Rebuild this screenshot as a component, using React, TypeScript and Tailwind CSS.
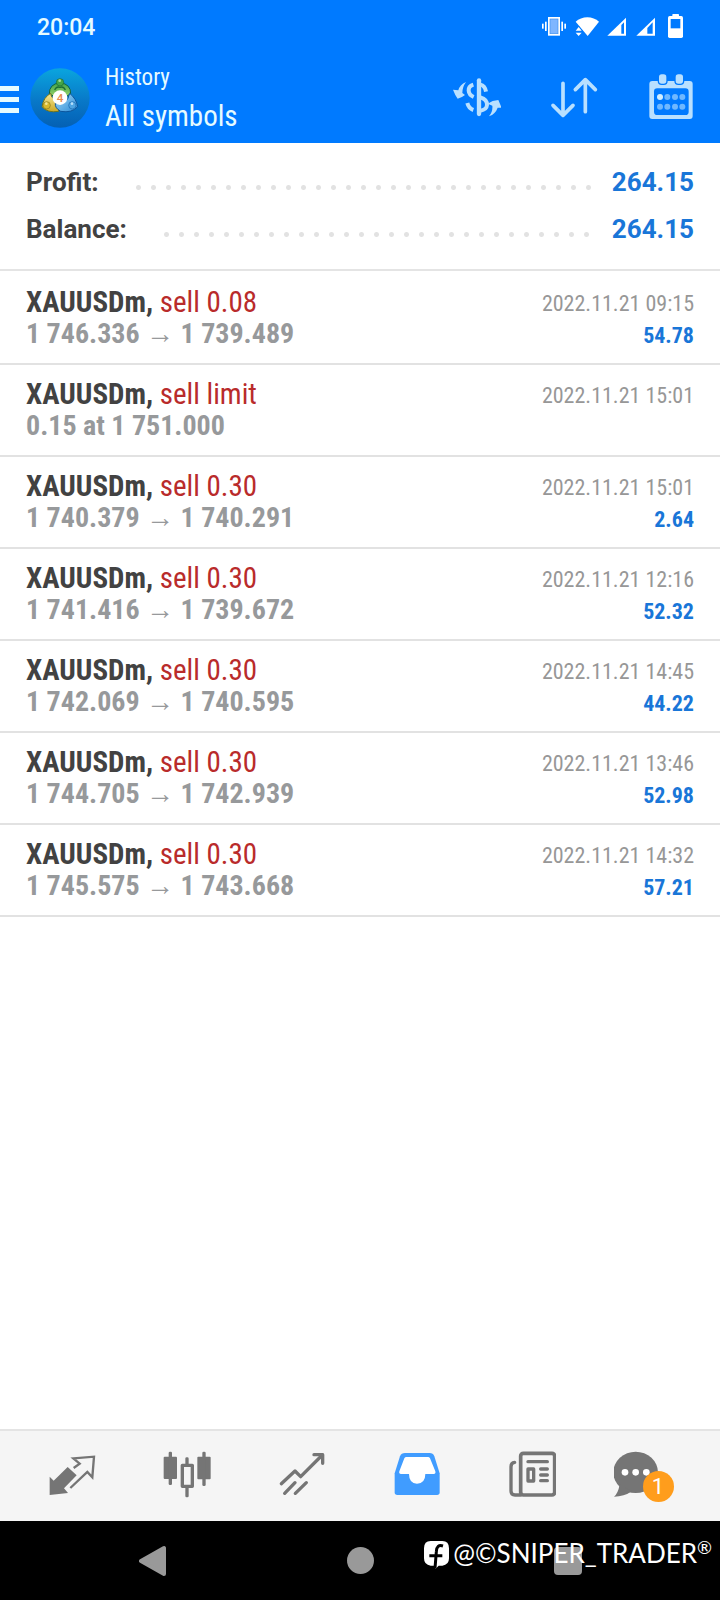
import type { ReactNode } from 'react';
import { clsx } from 'clsx';

interface Deal {
  id: number;
  symbol: string;
  action: string;
  detail: string;
  time: string;
  profit?: string;
}

const DEALS: Deal[] = [
  { id: 1, symbol: 'XAUUSDm', action: 'sell 0.08', detail: '1 746.336 → 1 739.489', time: '2022.11.21 09:15', profit: '54.78' },
  { id: 2, symbol: 'XAUUSDm', action: 'sell limit', detail: '0.15 at 1 751.000', time: '2022.11.21 15:01' },
  { id: 3, symbol: 'XAUUSDm', action: 'sell 0.30', detail: '1 740.379 → 1 740.291', time: '2022.11.21 15:01', profit: '2.64' },
  { id: 4, symbol: 'XAUUSDm', action: 'sell 0.30', detail: '1 741.416 → 1 739.672', time: '2022.11.21 12:16', profit: '52.32' },
  { id: 5, symbol: 'XAUUSDm', action: 'sell 0.30', detail: '1 742.069 → 1 740.595', time: '2022.11.21 14:45', profit: '44.22' },
  { id: 6, symbol: 'XAUUSDm', action: 'sell 0.30', detail: '1 744.705 → 1 742.939', time: '2022.11.21 13:46', profit: '52.98' },
  { id: 7, symbol: 'XAUUSDm', action: 'sell 0.30', detail: '1 745.575 → 1 743.668', time: '2022.11.21 14:32', profit: '57.21' }
];

const CONDENSED = "font-['Roboto_Condensed','Liberation_Sans_Narrow',Roboto,sans-serif]";

function StatusIcons() {
  return (
    <svg viewBox="0 0 426 72" className="h-6 w-[142px]" fill="#fff" aria-hidden="true">
      {/* vibrate */}
      <rect x="18" y="9" width="36" height="56" />
      <rect x="24" y="15" width="24" height="44" fill="#7fb6ff" stroke="#3d8ff0" strokeWidth="2" />
      <rect x="0" y="29" width="5" height="15" />
      <rect x="9" y="23" width="5" height="28" />
      <rect x="58" y="23" width="5" height="28" />
      <rect x="67" y="29" width="5" height="15" />
      {/* wifi */}
      <path d="M101 23C119 5 153 5 171 23L137 66Z" />
      <path d="M98 54L110 35L124 54L110 72Z" fill="#007aff" />
      <path d="M101 50L110 39L119 50ZM101 56H119L110 66Z" />
      {/* signal bars */}
      <path d="M196 65L252 11V65Z" />
      <path d="M238 33L246 25V59H238Z" fill="#007aff" />
      <path d="M283 65L339 11V65Z" />
      <path d="M316 42L332 25V59H316Z" fill="#007aff" />
      {/* battery */}
      <rect x="391" y="0" width="20" height="10" rx="2" />
      <rect x="378" y="6" width="45" height="66" rx="5" />
      <rect x="386" y="15" width="29" height="28" fill="#007aff" />
    </svg>
  );
}

function AppLogo() {
  return (
    <svg viewBox="0 0 180 180" className="size-[60px]" aria-hidden="true">
      <defs>
        <linearGradient id="disc" x1="0" y1="0" x2="0" y2="1">
          <stop offset="0" stopColor="#0aa5de" />
          <stop offset="0.55" stopColor="#0878c8" />
          <stop offset="1" stopColor="#0460b4" />
        </linearGradient>
        <linearGradient id="green" x1="0" y1="0" x2="0" y2="1">
          <stop offset="0" stopColor="#3fa04a" />
          <stop offset="1" stopColor="#9ad66c" />
        </linearGradient>
        <linearGradient id="yellow" x1="0" y1="0" x2="0" y2="1">
          <stop offset="0" stopColor="#f6ea9a" />
          <stop offset="1" stopColor="#cda926" />
        </linearGradient>
        <linearGradient id="sky" x1="0" y1="0" x2="1" y2="1">
          <stop offset="0" stopColor="#a4dbf8" />
          <stop offset="1" stopColor="#2b8ad6" />
        </linearGradient>
      </defs>
      <circle cx="90" cy="90" r="89" fill="url(#disc)" />
      <path d="M58 78Q57 48 90 44Q123 48 122 78Q112 88 90 86Q70 88 58 78Z" fill="url(#green)" stroke="#12633f" strokeWidth="3" />
      <path d="M62 76Q40 88 36 116Q52 136 86 130Q92 112 80 98Q64 92 62 76Z" fill="url(#yellow)" stroke="#6d7420" strokeWidth="3" />
      <path d="M119 76Q139 92 143 116Q126 136 92 130Q74 120 76 106Q112 112 119 76Z" fill="url(#sky)" stroke="#0c559c" strokeWidth="3" />
      <path d="M74 66Q78 54 90 58Q102 54 106 66" fill="none" stroke="#1c6d33" strokeWidth="4" />
      <circle cx="90" cy="43" r="11" fill="#44a548" stroke="#1c6d33" strokeWidth="2" />
      <circle cx="50" cy="112" r="11" fill="#d9b92d" stroke="#87791b" strokeWidth="2" />
      <circle cx="127" cy="112" r="11" fill="#4ea4e2" stroke="#1866ad" strokeWidth="2" />
      <circle cx="89" cy="38" r="4" fill="#a5dc9b" />
      <circle cx="49" cy="107" r="4" fill="#f4e694" />
      <circle cx="126" cy="107" r="4" fill="#b5defa" />
      <circle cx="90" cy="89" r="22" fill="#fff" />
      <text x="90" y="101" textAnchor="middle" fontSize="35" fontWeight="500" fontFamily="Roboto, sans-serif" fill="#e88a4c">
        4
      </text>
    </svg>
  );
}

function HeaderButton({ label, children }: { label: string; children: ReactNode }) {
  return (
    <button type="button" aria-label={label} className="size-12">
      <svg viewBox="0 0 144 144" className="size-12" fill="none" aria-hidden="true">
        {children}
      </svg>
    </button>
  );
}

function Header() {
  return (
    <header className="bg-[#007aff] text-[#e6fbff]">
      <div className="flex h-[52px] items-center justify-between pr-9 pl-[37px]">
        <span className="pt-1 text-[23px] font-medium">20:04</span>
        <StatusIcons />
      </div>
      <div className="flex h-[91px] items-center">
        <button type="button" aria-label="Menu" className="flex w-[19px] flex-col gap-1.5 pt-1">
          <span className="h-[5px] bg-[#e6fbff]" />
          <span className="h-[5px] bg-[#e6fbff]" />
          <span className="h-[5px] bg-[#e6fbff]" />
        </button>
        <div className="ml-[11px]">
          <AppLogo />
        </div>
        <div className={clsx(CONDENSED, 'ml-[15px] flex-1 pt-0.5')}>
          <p className="text-[23px] leading-[34px]">History</p>
          <h1 className="text-[29px] leading-[42px]">All symbols</h1>
        </div>
        <div className="flex gap-[49px] pr-[25px] pb-0.5">
          <HeaderButton label="Filter by symbol">
            <g fill="#b9e0ff">
              <path d="M39 27Q20 35 16 52L0 50Q6 66 14 77Q28 73 36 66L28 60Q28 42 39 27Z" />
              <path d="M136 81L146 104L134 104Q128 122 108 130Q120 116 118 98L104 92Q118 82 136 81Z" />
            </g>
            <g stroke="#b9e0ff" strokeWidth="12">
              <path d="M61 35Q46 40 47 53Q48 66 62 72" />
              <path d="M78 22V123" strokeWidth="13" strokeLinecap="round" />
              <path d="M82 35Q96 38 99 56" />
              <path d="M43 90Q47 106 61 111" />
              <path d="M82 73Q103 79 102 96Q101 110 82 113" />
            </g>
          </HeaderButton>
          <HeaderButton label="Sort">
            <g stroke="#b9e0ff" strokeWidth="11" strokeLinecap="round" strokeLinejoin="round">
              <path d="M39 31V126M9 97L39 127L69 97" />
              <path d="M106 116V20M76 50L106 20L136 50" />
            </g>
          </HeaderButton>
          <HeaderButton label="Period">
            <rect x="7" y="24" width="130" height="114" rx="9" fill="#b9e0ff" />
            <rect x="21" y="46" width="104" height="80" rx="10" fill="#007aff" />
            <rect x="32" y="0" width="30" height="36" rx="12" fill="#007aff" />
            <rect x="82" y="0" width="30" height="36" rx="12" fill="#007aff" />
            <rect x="36" y="4" width="22" height="28" rx="8" fill="#b9e0ff" />
            <rect x="86" y="4" width="22" height="28" rx="8" fill="#b9e0ff" />
            {[39, 61, 84, 106].map((x) => (
              <g key={x} fill="#6fb8ff">
                <circle cx={x} cy="72" r="9" fill={x === 39 ? '#d3efff' : '#6fb8ff'} />
                <circle cx={x} cy="101" r="9" />
              </g>
            ))}
          </HeaderButton>
        </div>
      </div>
    </header>
  );
}

function SummaryRow({ label, value }: { label: string; value: string }) {
  return (
    <div className="flex h-[47px] items-center text-[26px]">
      <dt className="font-bold text-[#424242]">{label}</dt>
      <span
        aria-hidden="true"
        className="mt-2.5 mr-4 ml-8 h-[15px] flex-1 bg-[radial-gradient(circle,#e2e2e2_2px,transparent_3px)] bg-[length:15px_15px] bg-repeat-x"
      />
      <dd className="font-bold text-[#1976d8]">{value}</dd>
    </div>
  );
}

function DealRow({ deal }: { deal: Deal }) {
  return (
    <li className={clsx(CONDENSED, 'flex h-[92px] justify-between border-b-2 border-[#e2e2e2] px-[26px] pt-[13px]')}>
      <div className="leading-8">
        <p className="text-[29px]">
          <span className="font-bold text-[#424242]">{deal.symbol},</span>{' '}
          <span className="text-[#b92b2b]">{deal.action}</span>
        </p>
        <p className="text-[28px] font-bold text-[#97999b]">{deal.detail}</p>
      </div>
      <div className="pt-0.5 text-right text-[22px] leading-8">
        <p className="text-[#979797]">{deal.time}</p>
        {deal.profit && <p className="font-bold text-[#1976d8]">{deal.profit}</p>}
      </div>
    </li>
  );
}

interface TabProps {
  label: string;
  active?: boolean;
  wide?: boolean;
  badge?: number;
  children: ReactNode;
}

function Tab({ label, active = false, wide = false, badge, children }: TabProps) {
  return (
    <button
      type="button"
      aria-label={label}
      aria-current={active ? 'page' : undefined}
      className="flex flex-1 items-center justify-center pb-1"
    >
      <span className="relative">
        <svg
          viewBox={wide ? '0 0 198 144' : '0 0 144 144'}
          className={clsx('h-12', wide ? 'w-[66px]' : 'w-12', active ? 'text-[#409cff]' : 'text-[#757575]')}
          fill="none"
          aria-hidden="true"
        >
          {children}
        </svg>
        {badge && (
          <span className="absolute top-[21px] left-[29px] flex size-[31px] items-center justify-center rounded-full bg-[#ff9d1c] text-[22px] leading-none text-white">
            {badge}
          </span>
        )}
      </span>
    </button>
  );
}

function TabBar() {
  return (
    <nav className="flex h-[92px] border-t-2 border-[#e4e4e4] bg-[#f5f5f5] pr-4 pl-3.5">
      <Tab label="Quotes">
        <path d="M5 80L17 92L59 51L86 76L48 115L60 129L5 135Z" fill="currentColor" />
        <path d="M77 54L95 41L76 25L138 20L133 82L118 66L67 114" stroke="currentColor" strokeWidth="7" />
      </Tab>
      <Tab label="Charts">
        <g fill="currentColor">
          <rect x="2" y="20" width="40" height="67" rx="3" />
          <rect x="17" y="5" width="10" height="100" rx="4" />
          <rect x="103" y="20" width="40" height="68" rx="3" />
          <rect x="118" y="5" width="10" height="103" rx="4" />
          <rect x="67" y="22" width="10" height="24" rx="4" />
          <rect x="67" y="110" width="10" height="32" rx="4" />
        </g>
        <rect x="58" y="46" width="30" height="63" stroke="currentColor" strokeWidth="10" strokeLinejoin="round" />
      </Tab>
      <Tab label="Trade">
        <g stroke="currentColor" strokeWidth="10" strokeLinecap="round" strokeLinejoin="round">
          <path d="M10 101L51 63L68 80L133 15" />
          <path d="M108 14H134V40" />
          <path d="M20 130L51 98M52 130L85 98" />
        </g>
      </Tab>
      <Tab label="History" active>
        <path
          d="M5 70L21 19Q25 9 36 9H110Q120 9 124 19L140 70V127Q140 135 132 135H13Q5 135 5 127Z"
          fill="currentColor"
        />
        <path
          d="M40 21Q36 21 34 25L19 64Q17 72 24 72H48Q48 100 72 101Q97 100 97 72H122Q129 72 127 64L111 25Q109 21 105 21Z"
          fill="#fff"
        />
      </Tab>
      <Tab label="News">
        <g stroke="currentColor" strokeWidth="10" strokeLinecap="round">
          <rect x="38" y="10" width="102" height="125" rx="8" strokeWidth="11" />
          <path d="M20 37Q9 38 9 50V123Q9 135 21 135H38" />
          <path d="M60 35H118" />
          <rect x="60" y="57" width="17" height="36" strokeLinejoin="round" />
          <path d="M98 57H118M98 75H118M98 92H118" />
        </g>
      </Tab>
      <Tab label="Messages" wide badge={1}>
        <ellipse cx="65" cy="67" rx="67" ry="62" fill="currentColor" />
        <path d="M17 104Q12 130 0 140Q30 140 54 124Z" fill="currentColor" />
        <g fill="#fff">
          <circle cx="33" cy="67" r="10" />
          <circle cx="65" cy="67" r="10" />
          <circle cx="97" cy="67" r="10" />
        </g>
      </Tab>
    </nav>
  );
}

function SystemBar() {
  return (
    <footer className="relative flex h-[79px] bg-black px-12">
      <button type="button" aria-label="Back" className="flex flex-1 items-center justify-center">
        <svg viewBox="0 0 27 32" className="h-8 w-[27px]" aria-hidden="true">
          <path d="M2 16L25 3V29Z" fill="#999" stroke="#999" strokeWidth="4" strokeLinejoin="round" />
        </svg>
      </button>
      <button type="button" aria-label="Home" className="flex flex-1 items-center justify-center">
        <span className="size-[27px] rounded-full bg-[#999]" />
      </button>
      <button type="button" aria-label="Recent apps" className="flex flex-1 items-center justify-center">
        <span className="size-7 rounded-sm bg-[#999]" />
      </button>
      <div className="absolute top-3.5 right-2 flex items-start gap-1 font-[Lato,sans-serif] text-white">
        <svg viewBox="0 0 75 84" className="mt-1.5 h-7 w-[25px]" aria-hidden="true">
          <path d="M20 0H55Q75 0 75 22V52Q75 72 55 74H44L34 84L36 74H20Q0 72 0 52V22Q0 0 20 0Z" fill="#fff" />
          <path d="M57 15Q38 9 37 32L33 82M16 44H55" stroke="#000" strokeWidth="9" fill="none" />
        </svg>
        <span className="flex items-start text-[26px] leading-9">
          @©SNIPER_TRADER<span className="text-[18px] leading-6">®</span>
        </span>
      </div>
    </footer>
  );
}

export default function App() {
  return (
    <div className="flex min-h-screen flex-col bg-white font-[Roboto,sans-serif]">
      <Header />
      <main className="flex-1">
        <dl className="border-b-2 border-[#e4e4e4] px-[26px] pt-4 pb-4">
          <SummaryRow label="Profit:" value="264.15" />
          <SummaryRow label="Balance:" value="264.15" />
        </dl>
        <ul className="pt-0.5">
          {DEALS.map((deal) => (
            <DealRow key={deal.id} deal={deal} />
          ))}
        </ul>
      </main>
      <TabBar />
      <SystemBar />
    </div>
  );
}
